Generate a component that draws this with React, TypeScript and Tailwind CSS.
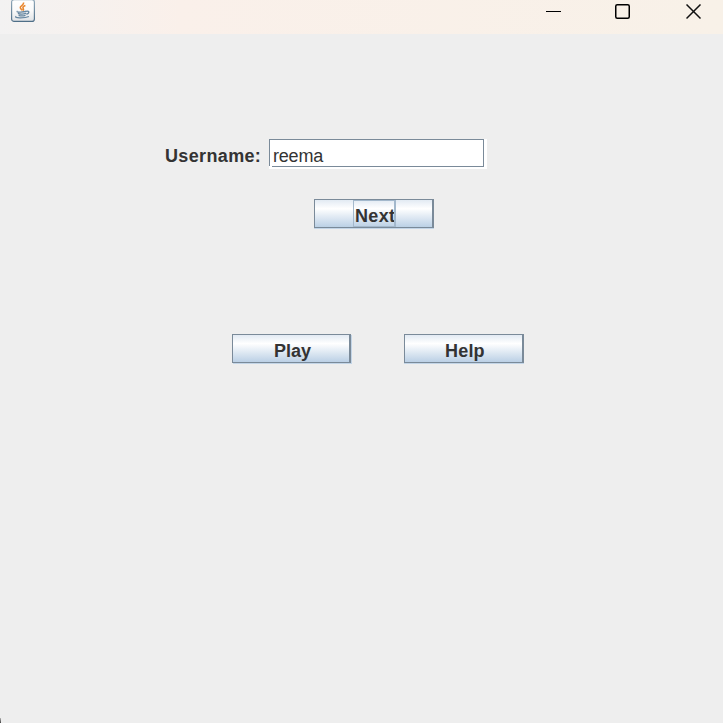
import type { ReactNode } from "react";

function JavaIcon() {
  return (
    <svg width="24" height="22" viewBox="0 0 24 22" className="block">
      <defs>
        <linearGradient id="tile" x1="0" y1="0" x2="0" y2="1">
          <stop offset="0" stopColor="#ffffff" />
          <stop offset="0.5" stopColor="#fafafa" />
          <stop offset="1" stopColor="#dfe2e5" />
        </linearGradient>
        <linearGradient id="edge" x1="0" y1="0" x2="0" y2="1">
          <stop offset="0" stopColor="#92a9ba" />
          <stop offset="1" stopColor="#4f6f88" />
        </linearGradient>
      </defs>
      <rect x="0.6" y="-0.4" width="22.8" height="21.8" rx="2.5" fill="url(#tile)" stroke="url(#edge)" strokeWidth="1.2" />
      <path d="M12.5 2.5c1 2.7-3.8 3.3-3.2 5.4.3 1 1.3 1.4 1.8 2.4M14.4 5.6c-2.2.9-3.1 1.8-2.1 3.1.5.7.2 1.3-.5 1.9" fill="none" stroke="#e8862e" strokeWidth="1.6" />
      <path d="M6.5 11.2c-1.8 1 4.8 1.3 9.2.1M6.9 13.3c1.9.9 5.6.9 8.2.1M7.6 15.3c1.8.7 4.7.7 6.9 0M15.8 11.2c2.8-.6 2.7 2.4-.4 3.1" fill="none" stroke="#6686a0" strokeWidth="1.4" />
      <path d="M5.3 16.4c-3.5 1.7 8.5 2 12.6.1" fill="none" stroke="#6686a0" strokeWidth="1.3" />
    </svg>
  );
}

function WindowControls() {
  return (
    <div className="flex pt-1">
      <svg width="16" height="16" className="mr-[53px]" shapeRendering="crispEdges">
        <path d="M0 7.5h15" stroke="#000" />
      </svg>
      <svg width="16" height="16" className="mr-[55px]">
        <rect x="0.75" y="0.75" width="13.5" height="13.5" rx="1.5" fill="none" stroke="#000" strokeWidth="1.5" />
      </svg>
      <svg width="16" height="16">
        <path d="M0.5 0.5l14 14M14.5 0.5l-14 14" fill="none" stroke="#111" strokeWidth="1.5" />
      </svg>
    </div>
  );
}

function SwingButton({ children, className }: { children: ReactNode; className: string }) {
  return (
    <button
      className={`flex h-[29px] border border-r-2 border-[#7a8a99] bg-linear-to-b from-[#e2eaf3] from-0% via-white via-32% to-[#bbd0e5] text-[18px] leading-[21px] font-bold ${className}`}
    >
      {children}
    </button>
  );
}

export default function App() {
  return (
    <main className="relative h-[723px] w-[723px] overflow-hidden bg-[#eeeeee] font-['Liberation_Sans',Arial,sans-serif] text-[#333333]">
      <header className="flex h-[34px] items-start justify-between bg-linear-to-r from-[#f3f2f2] via-[#faf0ea] via-25% to-[#f8f1e8] pr-[21px] pl-[11px]">
        <JavaIcon />
        <WindowControls />
      </header>
      <section className="flex pt-[105px] pl-[165px]">
        <label className="w-[104px] pt-[7px] text-[18px] leading-[21px] font-bold tracking-[0.35px]">Username:</label>
        <div className="relative border-r-[3px] border-b-2 border-white">
          <div className="h-[28px] w-[215px] border border-[#7a8a99] bg-white pt-[6px] pl-[3px] text-[18px] leading-[21px] tracking-[-0.2px]">reema</div>
          <span className="absolute bottom-0 left-0 h-px w-[3px] bg-white" />
        </div>
      </section>
      <div className="flex pt-[30px] pl-[314px]">
        <SwingButton className="w-[120px] pl-[38px] shadow-[0_1px_0_#c3d5e7]">
          <span className="h-[27px] w-[43px] overflow-hidden border border-r-2 border-[#a3b8cc] pt-[5px] pl-px text-left tracking-[0.35px]">Next</span>
        </SwingButton>
      </div>
      <div className="flex gap-[53px] pt-[106px] pl-[232px]">
        <SwingButton className="w-[119px] pt-[6px] pl-[41px] shadow-[1px_1px_0_#c3d5e7]">Play</SwingButton>
        <SwingButton className="w-[120px] pt-[6px] pl-[40px] tracking-[0.2px] shadow-[0_1px_0_#c3d5e7]">Help</SwingButton>
      </div>
      <span className="absolute bottom-0 left-0 h-[5px] w-px bg-linear-to-b from-[#b8b8b8] to-[#444444]" />
    </main>
  );
}
